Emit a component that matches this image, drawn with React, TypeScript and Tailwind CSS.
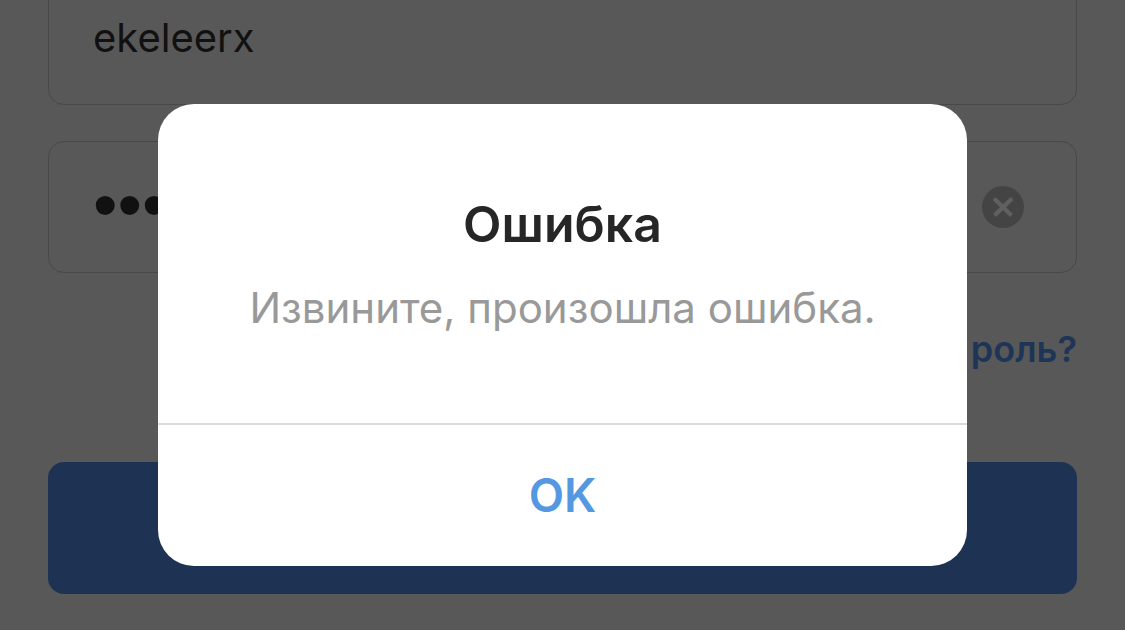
export default function App() {
    return (
        <div className="relative min-h-screen overflow-hidden bg-[#585858] font-['Inter','Liberation_Sans',sans-serif]">
            {/* Login form */}
            <form className="flex flex-col px-12" onSubmit={(e) => e.preventDefault()}>
                <input
                    type="text"
                    aria-label="Имя пользователя"
                    defaultValue="ekeleerx"
                    className="-mt-7 h-[133px] w-full rounded-2xl border border-[#484848] px-11 pb-0.5 text-[40px] text-[#111111] outline-none"
                />
                <div className="mt-9 flex h-[132px] items-center justify-between rounded-2xl border border-[#484848] pr-[52px] pl-11">
                    <input
                        type="password"
                        aria-label="Пароль"
                        defaultValue="password"
                        className="min-w-0 flex-1 pb-1 font-['Liberation_Sans',sans-serif] text-[70px] leading-20 text-[#111111] outline-none"
                    />
                    <button type="button" aria-label="Очистить">
                        <svg viewBox="0 0 42 42" className="size-[42px]">
                            <circle cx="21" cy="21" r="21" fill="#444444" />
                            <path d="M12 12.500L29.500 29.500M30 12.500L12.500 29.500" stroke="#606060" strokeWidth="4.200" />
                        </svg>
                    </button>
                </div>
                <a href="#" aria-label="Забыли пароль?" className="mt-14 self-end text-[36px] leading-10 font-semibold text-[#1e3558]">
                    роль?
                </a>
                <button type="submit" aria-label="Войти" className="mt-[93px] h-[132px] rounded-2xl bg-[#1e3353]" />
            </form>

            {/* Error dialog */}
            <div className="absolute inset-0 flex items-start justify-center pt-26">
                <div
                    role="alertdialog"
                    aria-labelledby="title"
                    aria-describedby="message"
                    className="w-[809px] overflow-hidden rounded-[36px] bg-white text-center"
                >
                    <div className="px-12 pt-[88px] pb-[83px]">
                        <h1 id="title" className="text-[50px] leading-16 font-semibold text-[#262626]">
                            Ошибка
                        </h1>
                        <p id="message" className="mt-5 text-[42px] leading-16 text-[#999999]">
                            Извините, произошла ошибка.
                        </p>
                    </div>
                    <button type="button" className="h-[143px] w-full border-t-2 border-[#dbdbdb] text-[46px] font-semibold text-[#5498e2]">
                        OK
                    </button>
                </div>
            </div>
        </div>
    );
}
